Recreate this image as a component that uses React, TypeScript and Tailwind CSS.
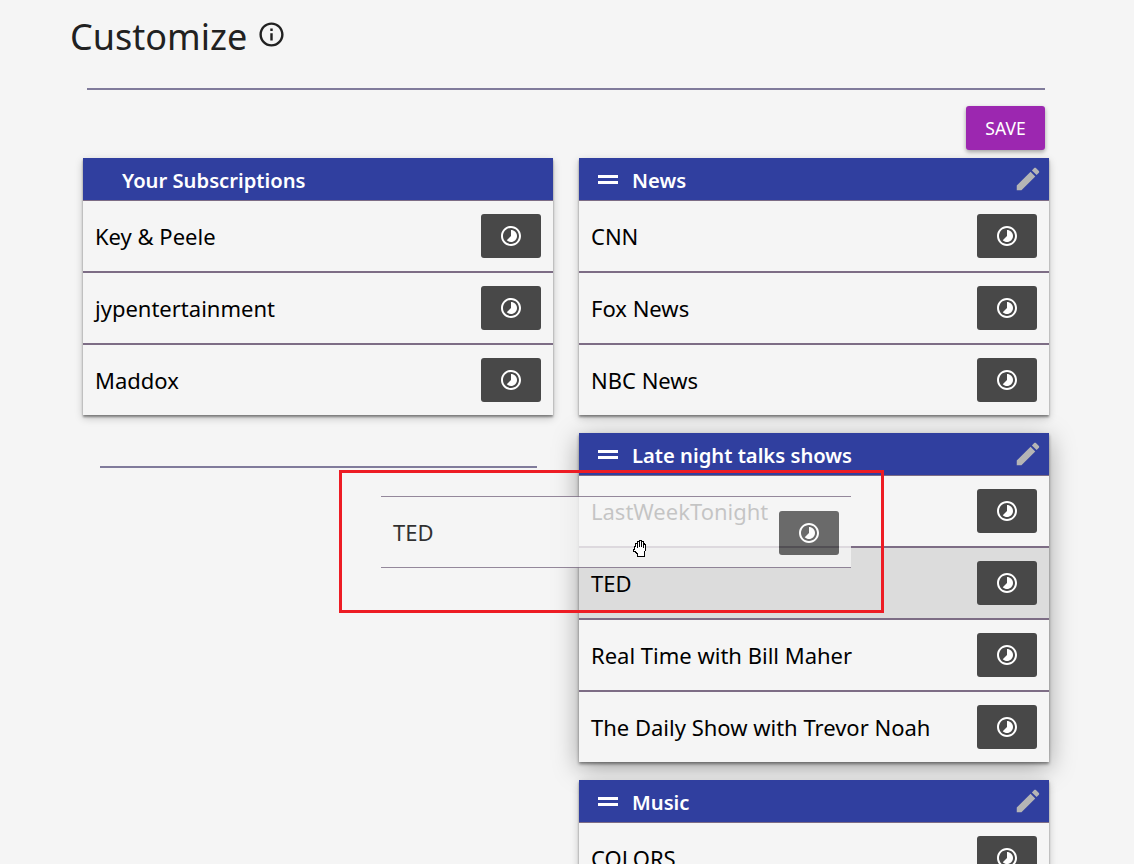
const font = "font-['Noto_Sans',sans-serif]"

function TimeIcon() {
    return (
        <svg width="24" height="24" viewBox="0 0 24 24" fill="#fff">
            <path d="M16.24 7.76C15.07 6.59 13.54 6 12 6v6l-4.24 4.24c2.34 2.34 6.14 2.34 8.49 0 2.34-2.34 2.34-6.14-.01-8.48zM12 2C6.48 2 2 6.48 2 12s4.480 10 10 10 10-4.480 10-10S17.520 2 12 2zm0 18c-4.420 0-8-3.580-8-8s3.580-8 8-8 8 3.580 8 8-3.580 8-8 8z" />
        </svg>
    )
}

function PencilIcon() {
    return (
        <svg width="30" height="30" viewBox="0 0 24 24" fill="#b5b5b5">
            <path d="M3 17.250V21h3.750L17.810 9.940l-3.750-3.750L3 17.250zM20.710 7.040c.39-.39.39-1.020 0-1.410l-2.340-2.340c-.39-.39-1.020-.39-1.410 0l-1.830 1.830 3.750 3.750 1.830-1.830z" />
        </svg>
    )
}

function Row({ title, last, active }: { title: string; last?: boolean; active?: boolean }) {
    return (
        <div
            className={`flex items-center justify-between px-3 text-[22px] text-black ${last ? 'h-[70px]' : 'h-[72px] border-b-2 border-[#7d6d85]'} ${active ? 'bg-[#dcdcdc]' : ''}`}
        >
            <span>{title}</span>
            <button className="flex h-11 w-[60px] items-center justify-center rounded-[3px] bg-[#484848]">
                <TimeIcon />
            </button>
        </div>
    )
}

function Card({
    title,
    rows,
    editable = true,
    activeRow,
    lifted
}: {
    title: string
    rows: string[]
    editable?: boolean
    activeRow?: string
    lifted?: boolean
}) {
    return (
        <div
            className={`bg-[#f5f5f5] ${lifted ? 'shadow-[0_2px_3px_rgba(0,0,0,0.45),0_6px_24px_rgba(0,0,0,0.35)]' : 'shadow-[0_2px_2px_rgba(0,0,0,0.4),0_3px_8px_rgba(0,0,0,0.22)]'}`}
        >
            <div className="flex h-[43px] items-center border-b border-[#7d6d85] bg-[#303f9f] pl-[19px] pr-[6px] text-[20.2px] font-semibold text-white">
                {editable ? (
                    <div className="mr-[14px] flex w-[20px] flex-col gap-[3px]">
                        <div className="h-[3px] bg-white" />
                        <div className="h-[3px] bg-white" />
                    </div>
                ) : (
                    <div className="w-[20px]" />
                )}
                <span className="flex-1 pt-[2px]">{title}</span>
                {editable && <PencilIcon />}
            </div>
            {rows.map((r, i) => (
                <Row key={r} title={r} last={i === rows.length - 1} active={r === activeRow} />
            ))}
        </div>
    )
}

export default function App() {
    return (
        <div className={`relative h-[864px] w-[1134px] overflow-hidden bg-[#f5f5f5] ${font}`}>
            <div className="flex items-center pl-[70px] pt-[12px]">
                <h1 className="text-[36px] leading-[50px] text-[#212121]">Customize</h1>
                <svg className="mb-[5px] ml-[10px]" width="29" height="29" viewBox="0 0 24 24" fill="#212121">
                    <path d="M11 7h2v2h-2zm0 4h2v6h-2zm1-9C6.480 2 2 6.480 2 12s4.480 10 10 10 10-4.480 10-10S17.520 2 12 2zm0 18c-4.410 0-8-3.590-8-8s3.590-8 8-8 8 3.590 8 8-3.590 8-8 8z" />
                </svg>
            </div>
            <div className="ml-[87px] mt-[26px] h-[2px] w-[958px] bg-[#807b9b]" />
            <div className="ml-[966px] mt-4 flex h-11 w-[79px] items-center justify-center rounded-[3px] bg-[#9c27b0] pt-[1px] text-[17.5px] text-white shadow-[0_2px_4px_rgba(0,0,0,0.35)]">
                SAVE
            </div>
            <div className="ml-[83px] mt-2 grid w-[966px] grid-cols-[470px_470px] gap-x-[26px]">
                <div>
                    <Card title="Your Subscriptions" rows={['Key & Peele', 'jypentertainment', 'Maddox']} editable={false} />
                    <div className="ml-[17px] mt-[51px] h-[2px] w-[437px] bg-[#807b9b]" />
                </div>
                <div className="flex flex-col gap-[18px]">
                    <Card title="News" rows={['CNN', 'Fox News', 'NBC News']} />
                    <Card
                        title="Late night talks shows"
                        rows={['LastWeekTonight', 'TED', 'Real Time with Bill Maher', 'The Daily Show with Trevor Noah']}
                        activeRow="TED"
                        lifted
                    />
                    <Card title="Music" rows={['COLORS', 'Vevo']} />
                </div>
            </div>
            {/* row being dragged */}
            <div className="absolute left-[381px] top-[496px] flex h-[72px] w-[470px] items-center justify-between border-y border-[#7d6d85] bg-[#f5f5f5] px-3 text-[22px] text-black opacity-80">
                <span>TED</span>
                <button className="mt-[1px] flex h-11 w-[60px] items-center justify-center rounded-[3px] bg-[#484848]">
                    <TimeIcon />
                </button>
            </div>
            <div className="absolute left-[339px] top-[470px] h-[143px] w-[545px] border-[3px] border-[#ed1c24]" />
            <svg className="absolute left-[631px] top-[540px]" width="17" height="17" viewBox="0 0 17 17" fill="#fff" stroke="#000" strokeWidth="1" shapeRendering="crispEdges">
                <path d="M3.500 9.500V6.500h1V3.500h2V1.500h2v-1h2v1h1.500v2h1.500v1h1v4.500l-1 3.500v4H6.500v-2.500L4 11.500H2.500V9.500z" />
                <path d="M6.500 3.500v4M8.500 1.500v5.500M10.500 1.500v5.500M12.500 3.500v4" fill="none" />
            </svg>
        </div>
    )
}
